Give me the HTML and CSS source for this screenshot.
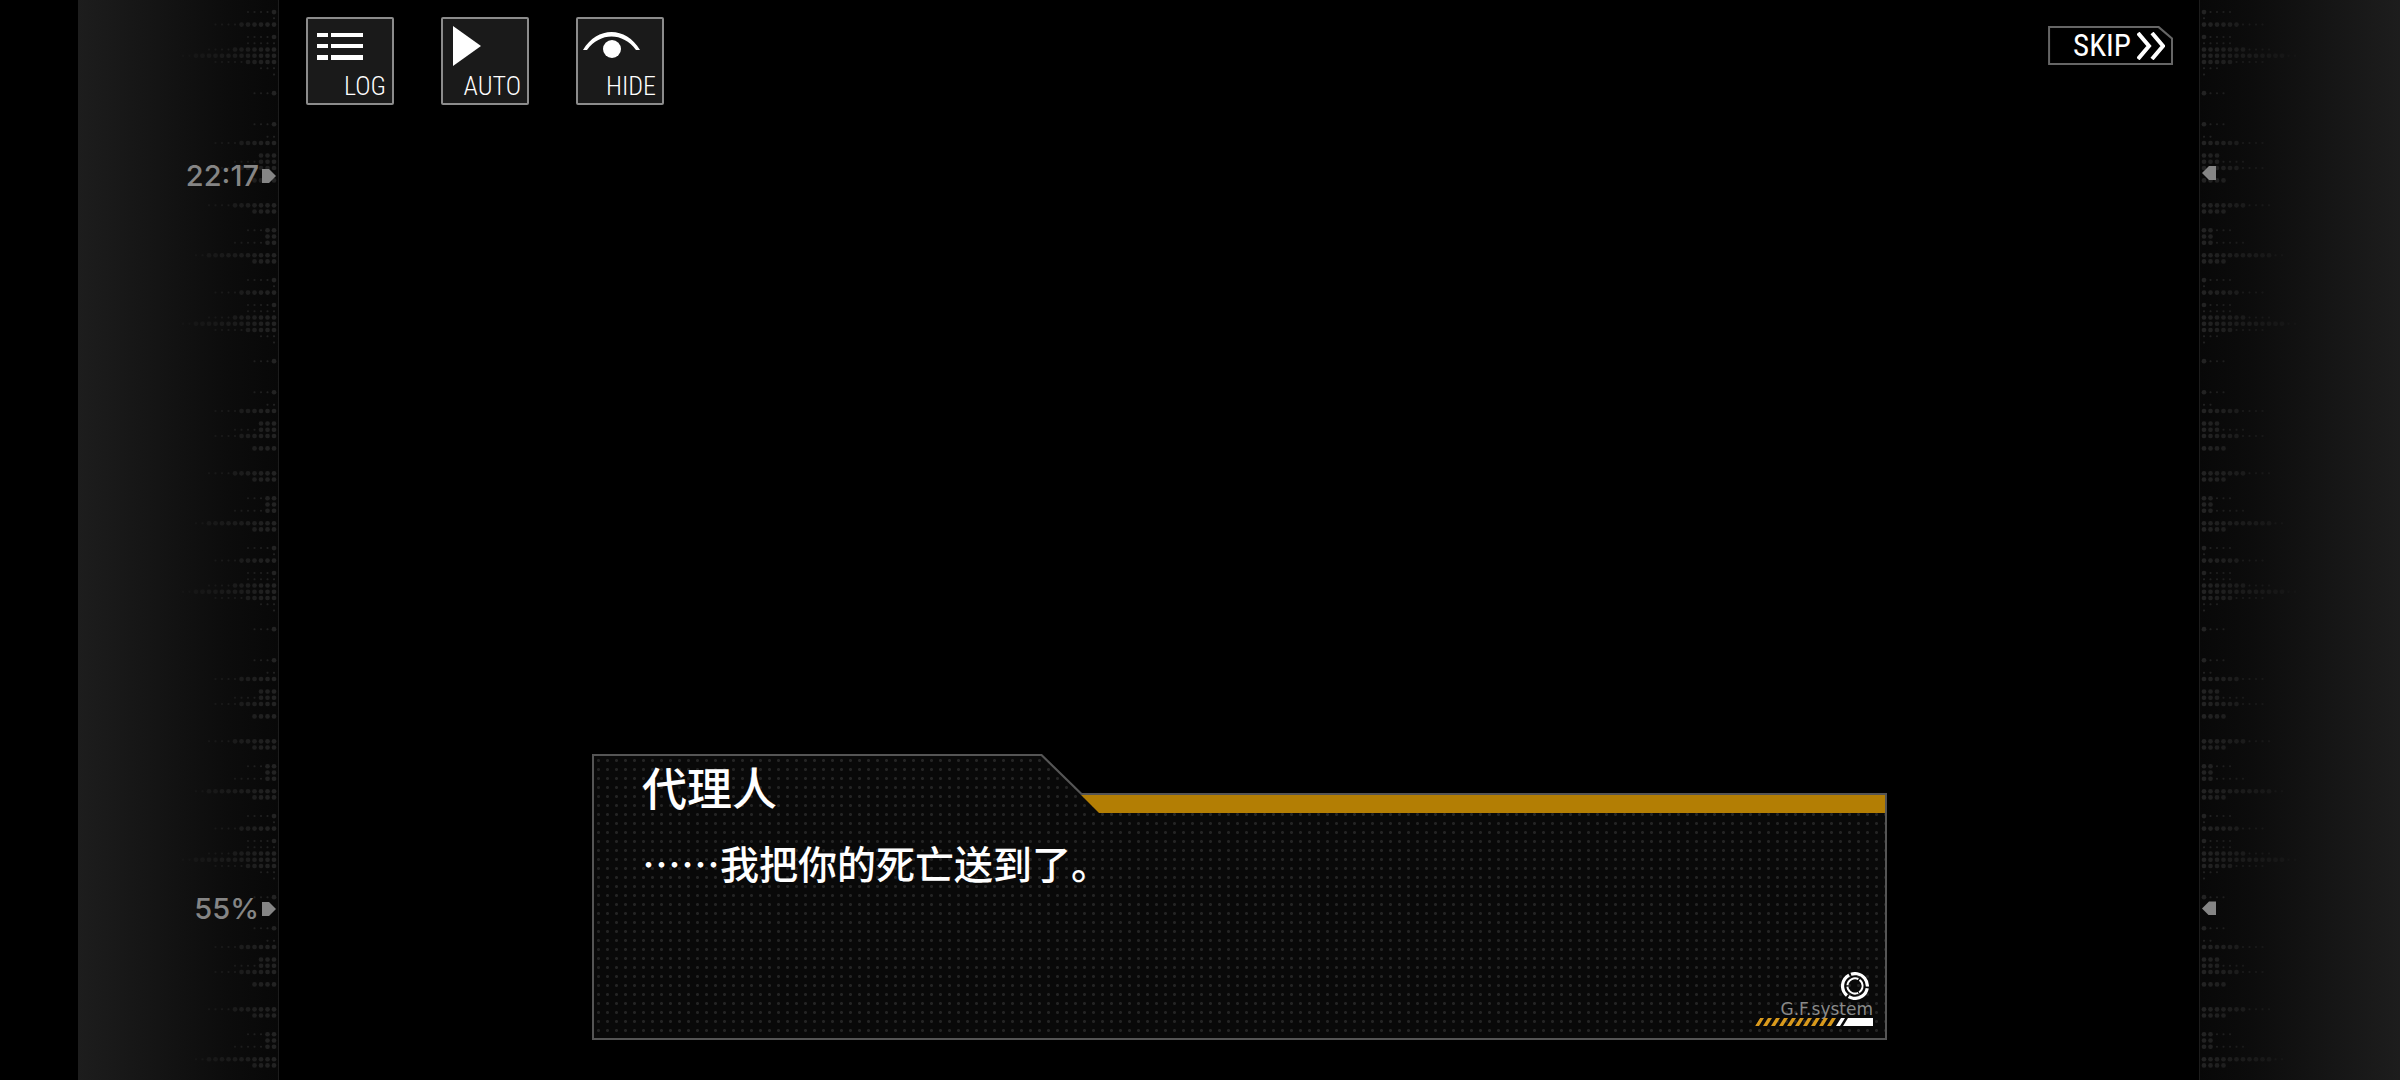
FILE: index.html
```
<!DOCTYPE html>
<html lang="zh-CN">
<head>
  <meta charset="UTF-8">
  <meta name="viewport" content="width=device-width, initial-scale=1.0">

  <title>代理人</title>

  <link rel="stylesheet" href="styles.css">
</head>
<body>
  <aside class="side side--left">
    <svg class="side__dots" aria-hidden="true"></svg>
    <div class="side__info">
      <time class="side__text">22:17</time>
      <span class="side__mark"></span>
    </div>
    <div class="side__info">
      <span class="side__text">55%</span>
      <span class="side__mark"></span>
    </div>
  </aside>

  <main class="stage">
    <nav class="menu">
      <button type="button" class="menu__btn">
        <svg class="menu__icon" viewBox="0 0 84 48" aria-hidden="true">
          <path d="M9 14h11v4H9zM23 14h32v4H23zM9 25h11v4H9zM23 25h32v4H23zM9 36h11v5H9zM23 36h32v5H23z"/>
        </svg>
        <span class="menu__label">LOG</span>
      </button>
      <button type="button" class="menu__btn">
        <svg class="menu__icon" viewBox="0 0 84 48" aria-hidden="true">
          <path d="M10 7l28 20-28 20z"/>
        </svg>
        <span class="menu__label">AUTO</span>
      </button>
      <button type="button" class="menu__btn">
        <svg class="menu__icon" viewBox="0 0 84 48" aria-hidden="true">
          <path d="M5 31C19 7 48 7 62 31H58C45 13 22 13 9 31z"/>
          <circle cx="34" cy="30" r="9"/>
        </svg>
        <span class="menu__label">HIDE</span>
      </button>
      <button type="button" class="skip">
        <span class="skip__inner">
          <span class="skip__label">SKIP</span>
          <svg class="skip__icon" viewBox="0 0 28 28" aria-hidden="true">
            <path d="M1 1l11 13L1 27M15 1l11 13-11 13"/>
          </svg>
        </span>
      </button>
    </nav>

    <section class="dialog">
      <div class="dialog__inner">
        <div class="dialog__bar"></div>
        <h1 class="dialog__name">代理人</h1>
        <p class="dialog__text">……我把你的死亡送到了。</p>
        <div class="dialog__foot">
          <svg class="dialog__ring" viewBox="0 0 28 28" aria-hidden="true">
            <circle cx="14" cy="14" r="12.4" stroke-width="3.2" stroke-dasharray="23.9 2" transform="rotate(10 14 14)"/>
            <circle cx="14" cy="14" r="7.6" stroke-width="2" stroke-dasharray="14.6 1.3" transform="rotate(65 14 14)"/>
          </svg>
          <span class="dialog__brand">G.F.system</span>
          <svg class="dialog__stripes" viewBox="0 0 118 8" aria-hidden="true">
            <defs>
              <pattern id="stripe" width="8" height="8" patternUnits="userSpaceOnUse">
                <path d="M0 8L5 0H9L4 8zM-8 8L-3 0H1L-4 8z" fill="#d99a1c"/>
              </pattern>
            </defs>
            <path d="M0 8L5 0H83L78 8z" fill="url(#stripe)"/>
            <path d="M81 8L86 0H90L85 8zM88 8L93 0H118V8z" fill="#fff"/>
          </svg>
        </div>
      </div>
    </section>
  </main>

  <aside class="side side--right">
    <svg class="side__dots" aria-hidden="true"></svg>
    <div class="side__info"><span class="side__mark"></span></div>
    <div class="side__info"><span class="side__mark"></span></div>
  </aside>

  <script>
    // [row, big dots, small dots]
    const rows = [
      [0, 6, 4], [2, 3, 0], [3, 3, 4], [4, 6, 4], [6, 4, 0],
      [10, 7, 4], [11, 4, 0], [14, 2, 3], [15, 2, 0], [16, 2, 5],
      [18, 11, 2], [19, 4, 0], [22, 1, 4], [23, 0, 1], [24, 6, 4],
      [26, 1, 4], [27, 0, 5], [28, 7, 4], [29, 13, 2], [30, 5, 5],
      [31, 0, 3], [32, 0, 1], [35, 1, 3], [40, 1, 3], [42, 0, 2]
    ];
    const tileHeight = 268;
    const stepY = tileHeight / 43;
    const stepX = 6.5;

    document.querySelectorAll('.side__dots').forEach(renderDots);

    function renderDots(svg, index) {
      const dots = rows.map(([row, big, small]) => {
        let line = '';
        for (let i = 0; i < big + small; i++) {
          const r = i < big ? 2.3 : 1;
          const opacity = 1 - i * 0.055;
          line += `<circle cx="${4 + i * stepX}" cy="${3 + row * stepY}" r="${r}" opacity="${opacity}"/>`;
        }
        return line;
      }).join('');

      svg.innerHTML = `
        <pattern id="dots${index}" y="140" width="130" height="${tileHeight}" patternUnits="userSpaceOnUse">
          <g fill="#232323">${dots}</g>
        </pattern>
        <rect width="130" height="100%" fill="url(#dots${index})"/>
      `;
    }
  </script>
</body>
</html>
```
FILE: styles.css
```
* {
  box-sizing: border-box;
}

body, html {
  margin: 0;
  padding: 0;
  height: 100%;
}

body {
  display: flex;
  padding-left: 78px;
  background: #000;
  color: #fff;
  font-family: "Noto Sans CJK SC", sans-serif;
  overflow: hidden;
}

button {
  margin: 0;
  padding: 0;
  border: 0;
  color: #fff;
  font-family: "Liberation Sans Narrow", "Roboto Condensed", sans-serif;
  cursor: pointer;
}

/* side panels */

.side {
  position: relative;
  flex: none;
  width: 201px;
  display: grid;
  grid-template-rows: 79.5% 1fr;
  padding-top: 158px;
  background: linear-gradient(to right, #1d1d1d, #141414 40%, #0c0c0c 75%, #080808);
  border-right: 1px solid #1c1c1c;
}

.side--right {
  padding-top: 155px;
  background: linear-gradient(to left, #1d1d1d, #141414 40%, #0c0c0c 75%, #080808);
  border-right: 0;
  border-left: 1px solid #1c1c1c;
}

.side__dots {
  position: absolute;
  top: 0;
  left: 0;
  width: 100%;
  height: 100%;
}

.side--left .side__dots {
  transform: scaleX(-1);
}

.side__info {
  position: relative;
  display: flex;
  align-items: center;
  align-self: start;
  gap: 3px;
  height: 36px;
  padding: 0 2px;
}

.side--left .side__info {
  justify-content: flex-end;
}

.side__text {
  color: #858585;
  font-family: Inter, sans-serif;
  font-size: 29px;
  font-weight: 500;
  line-height: 36px;
}

.side__mark {
  width: 14px;
  height: 14px;
  background: #858585;
  clip-path: polygon(0 0, 50% 0, 100% 50%, 50% 100%, 0 100%);
}

.side--right .side__mark {
  clip-path: polygon(100% 0, 50% 0, 0 50%, 50% 100%, 100% 100%);
}

/* stage */

.stage {
  flex: 1;
  display: flex;
  flex-direction: column;
  justify-content: space-between;
  padding: 17px 26px 40px 27px;
}

.menu {
  display: flex;
  align-items: flex-start;
  gap: 47px;
}

.menu__btn {
  display: flex;
  flex-direction: column;
  width: 88px;
  height: 88px;
  background: #1a1a1a;
  border: 2px solid #8c8c8c;
  border-radius: 2px;
}

.menu__icon {
  width: 84px;
  height: 48px;
  fill: #fff;
}

.menu__label {
  align-self: flex-end;
  padding: 3px 6px 0 0;
  font-size: 26px;
  font-weight: 300;
  line-height: 32px;
}

.skip {
  margin: 9px 0 0 auto;
  padding: 2px;
  background: #666;
  clip-path: polygon(0 0, 111px 0, 100% 12px, 100% 100%, 0 100%);
}

.skip__inner {
  display: flex;
  align-items: center;
  gap: 6px;
  height: 35px;
  padding: 0 6px 0 23px;
  background: #000;
  clip-path: polygon(0 0, 108px 0, 100% 11px, 100% 100%, 0 100%);
}

.skip__label {
  font-size: 31px;
  line-height: 35px;
}

.skip__icon {
  width: 28px;
  height: 28px;
  fill: none;
  stroke: #fff;
  stroke-width: 4;
}

/* dialog */

.dialog {
  margin: 0 286px;
  padding: 2px;
  background: #555;
  clip-path: polygon(0 0, 450px 0, 490px 39px, 100% 39px, 100% 100%, 0 100%);
}

.dialog__inner {
  display: grid;
  grid-template-columns: 1fr auto;
  grid-template-rows: 76px 1fr;
  height: 282px;
  background: radial-gradient(circle, #242424 1px, #090909 2px) 0 0 / 9px 9px;
  clip-path: polygon(0 0, 447px 0, 487px 39px, 100% 39px, 100% 100%, 0 100%);
}

.dialog__bar {
  grid-area: 1 / 1 / 2 / 3;
  height: 18px;
  margin: 39px 0 0 487px;
  background: #b37e04;
  clip-path: polygon(0 0, 100% 0, 100% 100%, 18px 100%);
}

.dialog__name {
  grid-area: 1 / 1 / 2 / 3;
  margin: 0;
  padding-left: 48px;
  font-size: 45px;
  font-weight: 500;
  line-height: 62px;
}

.dialog__text {
  margin: 0;
  padding-left: 48px;
  font-size: 39px;
  font-weight: 500;
  line-height: 60px;
}

.dialog__foot {
  display: flex;
  flex-direction: column;
  align-items: flex-end;
  justify-content: flex-end;
  padding: 0 12px 12px 0;
}

.dialog__ring {
  width: 28px;
  height: 28px;
  margin-right: 4px;
  fill: none;
  stroke: #fff;
}

.dialog__brand {
  color: #8a8a8a;
  font-family: "DejaVu Sans", sans-serif;
  font-size: 17px;
  line-height: 18px;
}

.dialog__stripes {
  width: 118px;
  height: 8px;
}
```
